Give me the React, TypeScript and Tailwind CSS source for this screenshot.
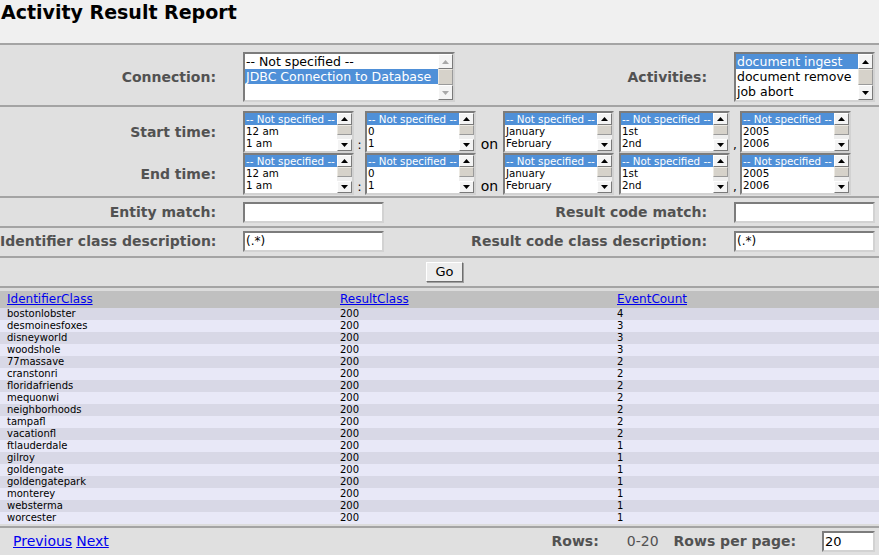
import React from "react";

function Arrow({ up, color }: { up?: boolean; color: string }) {
  return (
    <svg width="7" height="4" viewBox="0 0 7 4">
      <path d={up ? "M0 4 L3.5 0 L7 4 Z" : "M0 0 L7 0 L3.5 4 Z"} fill={color} />
    </svg>
  );
}

function ScrollBar({ disabled, btnH, thumbH }: { disabled?: boolean; btnH: string; thumbH: string }) {
  const btn =
    "flex items-center justify-center bg-[#f4f4f4] border border-t-white border-l-white border-r-[#7a7a7a] border-b-[#7a7a7a] " +
    btnH;
  const c = disabled ? "#a8a8a8" : "#000000";
  return (
    <div className="w-[15px] h-full flex flex-col bg-[#eeeeee]">
      <div className={btn}>
        <Arrow up color={c} />
      </div>
      {disabled ? (
        <div className="flex-1 bg-[#d6d2ca] border border-t-[#ece9e2] border-l-[#ece9e2] border-r-[#9a9a9a] border-b-[#9a9a9a]" />
      ) : (
        <>
          <div className={"bg-[#d6d2ca] border border-t-[#ece9e2] border-l-[#ece9e2] border-r-[#9a9a9a] border-b-[#9a9a9a] " + thumbH} />
          <div className="flex-1" />
        </>
      )}
      <div className={btn}>
        <Arrow color={c} />
      </div>
    </div>
  );
}

function ListBox({
  items,
  sel,
  box,
  row,
  disabled,
  btnH,
  thumbH,
}: {
  items: string[];
  sel: number;
  box: string;
  row: string;
  disabled?: boolean;
  btnH: string;
  thumbH: string;
}) {
  return (
    <div
      className={
        "flex bg-white border-2 border-t-[#7c7c7c] border-l-[#7c7c7c] border-r-[#d2d2d2] border-b-[#d2d2d2] overflow-hidden " +
        box
      }
    >
      <div className="flex-1 flex flex-col overflow-hidden">
        {items.map((t, i) => (
          <div
            key={i}
            className={
              "whitespace-nowrap pl-[1px] " +
              row +
              (i === sel ? " bg-[#4f90d8] text-white" : " text-black")
            }
          >
            {t}
          </div>
        ))}
      </div>
      <ScrollBar disabled={disabled} btnH={btnH} thumbH={thumbH} />
    </div>
  );
}

function TimeBox({ items }: { items: string[] }) {
  return (
    <ListBox
      items={items}
      sel={0}
      box="w-[111px] h-[42px]"
      row="h-[12px] text-[10.3px] leading-[12px]"
      btnH="h-[12px]"
      thumbH="h-[10px]"
    />
  );
}

function TimeLine() {
  return (
    <div className="flex items-end">
      <TimeBox items={["-- Not specified --", "12 am", "1 am"]} />
      <span className="w-[11px] text-center text-[12px] leading-[14px] text-black pb-[1px]">:</span>
      <TimeBox items={["-- Not specified --", "0", "1"]} />
      <span className="w-[27px] text-center text-[14px] leading-[16px] text-black pb-[1px]">on</span>
      <TimeBox items={["-- Not specified --", "January", "February"]} />
      <span className="w-[5px]" />
      <TimeBox items={["-- Not specified --", "1st", "2nd"]} />
      <span className="w-[10px] text-center text-[12px] leading-[14px] text-black pb-[1px]">,</span>
      <TimeBox items={["-- Not specified --", "2005", "2006"]} />
    </div>
  );
}

function TextInput({ value, w }: { value: string; w: string }) {
  return (
    <div
      className={
        "h-[21px] bg-white border-2 border-t-[#7c7c7c] border-l-[#7c7c7c] border-r-[#d2d2d2] border-b-[#d2d2d2] text-[12px] leading-[17px] pl-[1px] text-black " +
        w
      }
    >
      {value}
    </div>
  );
}

const label = "text-[14px] font-bold text-[#525252] whitespace-nowrap";

const rows: [string, string, string][] = [
  ["bostonlobster", "200", "4"],
  ["desmoinesfoxes", "200", "3"],
  ["disneyworld", "200", "3"],
  ["woodshole", "200", "3"],
  ["77massave", "200", "2"],
  ["cranstonri", "200", "2"],
  ["floridafriends", "200", "2"],
  ["mequonwi", "200", "2"],
  ["neighborhoods", "200", "2"],
  ["tampafl", "200", "2"],
  ["vacationfl", "200", "2"],
  ["ftlauderdale", "200", "1"],
  ["gilroy", "200", "1"],
  ["goldengate", "200", "1"],
  ["goldengatepark", "200", "1"],
  ["monterey", "200", "1"],
  ["websterma", "200", "1"],
  ["worcester", "200", "1"],
];

export default function App() {
  return (
    <div className="w-[879px] h-[555px] overflow-hidden bg-[#f0f0f0] font-['DejaVu_Sans',sans-serif] text-black">
      <div className="h-[43px] text-[19px] font-bold leading-[24px] pl-[1px]">Activity Result Report</div>

      <div className="border-t-2 border-[#a4a4a4] bg-[#e0e0e0]">
        {/* Connection / Activities */}
        <div className="flex items-center pt-[7px] pb-[3px] border-b-2 border-[#a4a4a4]">
          <div className={"w-[216px] text-right " + label}>Connection:</div>
          <div className="ml-[27px]">
            <ListBox
              items={["-- Not specified --", "JDBC Connection to Database", ""]}
              sel={1}
              box="w-[212px] h-[50px]"
              row="h-[15px] text-[12.5px] leading-[15px]"
              disabled
              btnH="h-[15px]"
              thumbH="h-[16px]"
            />
          </div>
          <div className={"flex-1 text-right " + label}>Activities:</div>
          <div className="ml-[27px] mr-[4px]">
            <ListBox
              items={["document ingest", "document remove", "job abort"]}
              sel={0}
              box="w-[141px] h-[50px]"
              row="h-[15px] text-[12.5px] leading-[15px]"
              btnH="h-[15px]"
              thumbH="h-[16px]"
            />
          </div>
        </div>

        {/* Times */}
        <div className="flex pt-[4px] pb-[1px] border-b-2 border-[#a4a4a4]">
          <div className="w-[216px] flex flex-col">
            <div className={"h-[42px] flex items-center justify-end " + label}>Start time:</div>
            <div className={"h-[42px] flex items-center justify-end " + label}>End time:</div>
          </div>
          <div className="ml-[27px] flex flex-col">
            <TimeLine />
            <TimeLine />
          </div>
        </div>

        {/* Entity match */}
        <div className="flex items-center pt-[4px] pb-[3px] border-b-2 border-[#a4a4a4]">
          <div className={"w-[216px] text-right " + label}>Entity match:</div>
          <div className="ml-[27px]">
            <TextInput value="" w="w-[141px]" />
          </div>
          <div className={"flex-1 text-right " + label}>Result code match:</div>
          <div className="ml-[27px] mr-[4px]">
            <TextInput value="" w="w-[141px]" />
          </div>
        </div>

        {/* Class descriptions */}
        <div className="flex items-center pt-[3px] pb-[4px] border-b-2 border-[#a4a4a4]">
          <div className={"w-[216px] text-right " + label}>Identifier class description:</div>
          <div className="ml-[27px]">
            <TextInput value="(.*)" w="w-[141px]" />
          </div>
          <div className={"flex-1 text-right " + label}>Result code class description:</div>
          <div className="ml-[27px] mr-[4px]">
            <TextInput value="(.*)" w="w-[141px]" />
          </div>
        </div>

        {/* Go */}
        <div className="flex justify-center pl-[10px] pt-[4px] pb-[4px] border-b-2 border-[#a4a4a4]">
          <button className="w-[37px] h-[20px] bg-[#ededed] border border-t-white border-l-white border-r-[#6e6e6e] border-b-[#6e6e6e] shadow-[1px_1px_0_#a0a0a0] text-[13px] leading-[16px] text-black">
            Go
          </button>
        </div>
      </div>

      {/* Table */}
      <div className="bg-[#dcdcdc] pt-[3px]">
        <div className="grid grid-cols-[333px_277px_1fr] bg-[#c0c0c0] h-[17px] items-center text-[12px] leading-[15px]">
          <a className="pl-[7px] text-[#0000ee] underline">IdentifierClass</a>
          <a className="pl-[7px] text-[#0000ee] underline">ResultClass</a>
          <a className="pl-[7px] text-[#0000ee] underline">EventCount</a>
        </div>
        {rows.map((r, i) => (
          <div
            key={i}
            className={
              "grid grid-cols-[333px_277px_1fr] h-[12px] text-[10px] leading-[12px] text-black " +
              (i % 2 === 0 ? "bg-[#d8d8e6]" : "bg-[#e8e8f7]")
            }
          >
            <div className="pl-[7px]">{r[0]}</div>
            <div className="pl-[7px]">{r[1]}</div>
            <div className="pl-[7px]">{r[2]}</div>
          </div>
        ))}
        <div className="h-[2px]" />
      </div>

      {/* Footer */}
      <div className="border-t-2 border-[#a4a4a4] bg-[#e0e0e0] h-[29px] flex items-center">
        <div className="pl-[13px] text-[14px] flex gap-[4px]">
          <a className="text-[#0000ee] underline">Previous</a>
          <a className="text-[#0000ee] underline">Next</a>
        </div>
        <div className="flex-1" />
        <div className={label}>Rows:</div>
        <div className="ml-[28px] text-[14px] text-[#525252]">0-20</div>
        <div className={"ml-[15px] " + label}>Rows per page:</div>
        <div className="ml-[26px] mr-[4px]">
          <TextInput value="20" w="w-[53px] h-[20px] text-[13px]" />
        </div>
      </div>
    </div>
  );
}
